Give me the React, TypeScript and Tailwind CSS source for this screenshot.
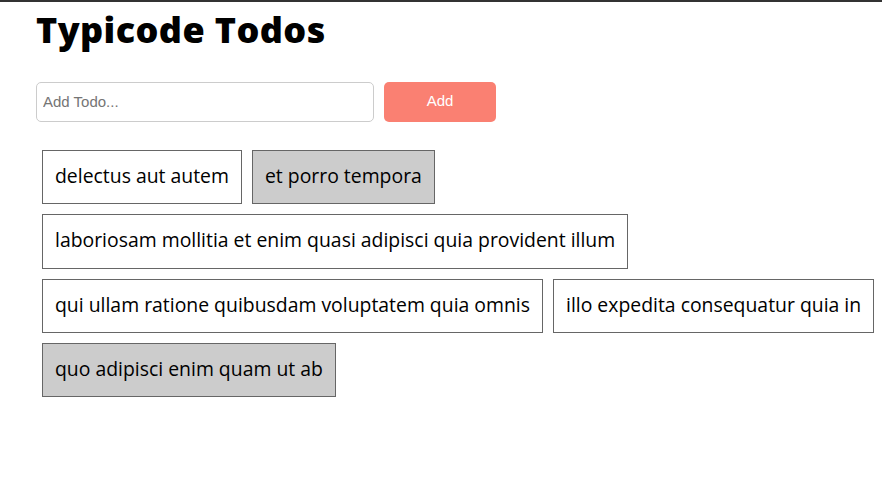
import React from "react";

const todos = [
  { title: "delectus aut autem", completed: false },
  { title: "et porro tempora", completed: true },
  { title: "laboriosam mollitia et enim quasi adipisci quia provident illum", completed: false },
  { title: "qui ullam ratione quibusdam voluptatem quia omnis", completed: false },
  { title: "illo expedita consequatur quia in", completed: false },
  { title: "quo adipisci enim quam ut ab", completed: true },
];

export default function App() {
  return (
    <div className="min-h-[479px] bg-white border-t-2 border-[#333]">
      <div className="pl-[36px]">
        <h1
          className="text-[36px] leading-[44px] font-extrabold text-black pt-[6px] tracking-[0.4px]"
          style={{ fontFamily: '"Open Sans", sans-serif' }}
        >
          Typicode Todos
        </h1>
        <form className="flex mt-[30px] gap-[10px]" onSubmit={(e) => e.preventDefault()}>
          <input
            type="text"
            placeholder="Add Todo..."
            className="w-[338px] h-[40px] border border-[#ccc] rounded-[5px] px-[6px] pb-[1px] text-[15px] placeholder:text-[#757575] outline-none"
            style={{ fontFamily: '"Liberation Sans", Arial, sans-serif' }}
          />
          <button
            type="submit"
            className="w-[112px] h-[40px] rounded-[5px] bg-[#fa8072] text-white text-[15px] pb-[2px]"
            style={{ fontFamily: '"Liberation Sans", Arial, sans-serif' }}
          >
            Add
          </button>
        </form>
      </div>
      <div className="flex flex-wrap pl-[37px] mt-[23px]">
        {todos.map((t) => (
          <div
            key={t.title}
            className={`m-[5px] border border-[#666] px-[12px] pt-[13px] pb-[15px] text-[19.4px] leading-[24.33px] text-black ${
              t.completed ? "bg-[#ccc]" : "bg-white"
            }`}
            style={{ fontFamily: '"Open Sans", sans-serif' }}
          >
            {t.title}
          </div>
        ))}
      </div>
    </div>
  );
}
